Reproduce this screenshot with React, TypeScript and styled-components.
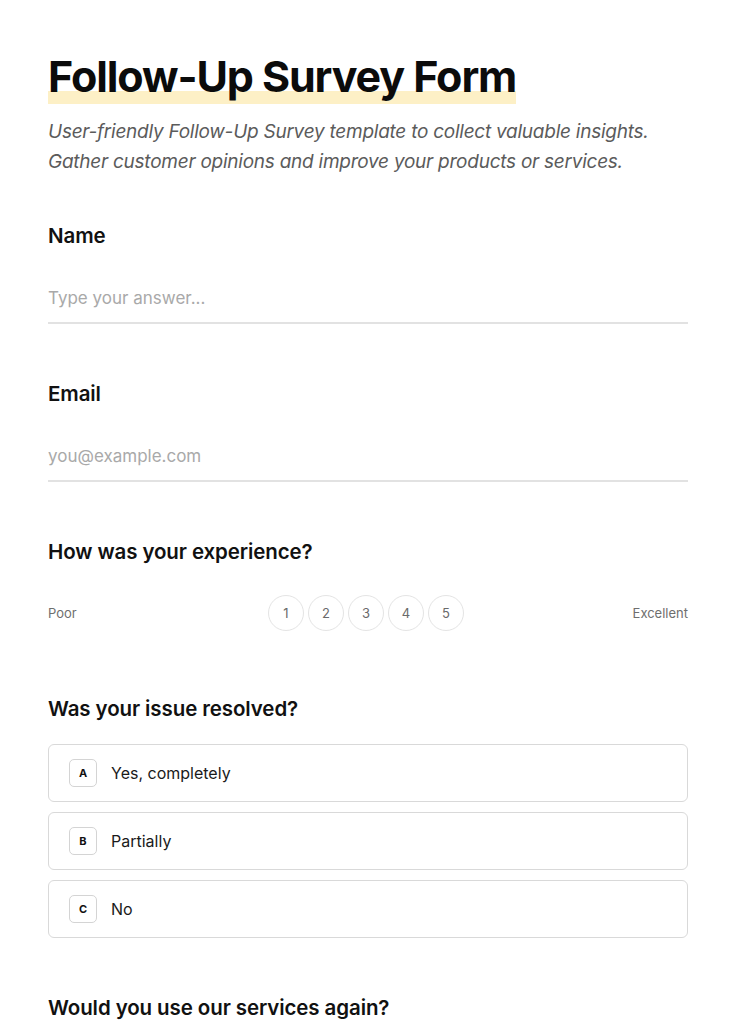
import styled, { createGlobalStyle } from 'styled-components';

const GlobalStyle = createGlobalStyle`
  html, body {
    margin: 0;
    padding: 0;
    background: #ffffff;
  }
  body {
    font-family: "Inter", "Liberation Sans", sans-serif;
    color: #111111;
  }
  * {
    box-sizing: border-box;
  }
`;

// Page wrapper
const Page = styled.div`
  width: 736px;
  padding: 49px 48px 0;
`;

const Header = styled.header`
  margin-bottom: 45px;
`;

const Title = styled.h1`
  margin: 0;
  font-size: 43px;
  line-height: 54px;
  font-weight: 700;
  letter-spacing: -1.1px;
  color: #0b0b0b;
`;

// Yellow marker underline behind the title
const Highlight = styled.span`
  display: inline-block;
  line-height: 54px;
  padding-bottom: 1px;
  vertical-align: top;
  background: linear-gradient(
    to bottom,
    transparent 0,
    transparent 42px,
    #fdf0c6 42px,
    #fdf0c6 55px
  );
`;

const Subtitle = styled.p`
  margin: 13px 0 0;
  font-size: 19px;
  line-height: 30px;
  font-style: italic;
  color: #5b5b5b;
  letter-spacing: -0.25px;
`;

const Form = styled.form`
  display: flex;
  flex-direction: column;
  gap: 56px;
`;

const Field = styled.div`
  display: flex;
  flex-direction: column;
`;

const Label = styled.label<{ $gap?: number }>`
  font-size: 20.5px;
  line-height: 28px;
  font-weight: 600;
  letter-spacing: -0.1px;
  color: #111111;
  margin-bottom: ${(p) => p.$gap ?? 23}px;
`;

const TextInput = styled.input`
  height: 51px;
  padding: 0;
  border: none;
  border-bottom: 2px solid #e2e2e2;
  font-family: inherit;
  font-size: 17px;
  color: #222;
  outline: none;
  background: transparent;
  &::placeholder {
    color: #a9a9a9;
  }
`;

const RatingRow = styled.div`
  display: flex;
  align-items: center;
  justify-content: space-between;
  padding-bottom: 8px;
`;

const ScaleLabel = styled.span<{ $right?: boolean }>`
  font-size: 13px;
  color: #6e6e6e;
  width: ${(p) => (p.$right ? 84 : 80)}px;
  text-align: ${(p) => (p.$right ? 'right' : 'left')};
`;

const Circles = styled.div`
  display: flex;
  gap: 4px;
`;

const Circle = styled.button`
  width: 36px;
  height: 36px;
  border-radius: 50%;
  border: 1px solid #e4e4e4;
  background: #fff;
  font-family: inherit;
  font-size: 13px;
  color: #6a6a6a;
  padding: 0;
  display: flex;
  align-items: center;
  justify-content: center;
`;

const Options = styled.div`
  display: flex;
  flex-direction: column;
  gap: 10px;
`;

const Option = styled.div`
  height: 58px;
  border: 1px solid #d9d9d9;
  border-radius: 6px;
  display: flex;
  align-items: center;
  padding: 0 20px;
  gap: 14px;
`;

const Key = styled.span`
  width: 28px;
  height: 28px;
  border: 1px solid #d4d4d4;
  border-radius: 5px;
  display: flex;
  align-items: center;
  justify-content: center;
  font-size: 11px;
  font-weight: 700;
  color: #111;
`;

const OptionText = styled.span`
  font-size: 16px;
  color: #1a1a1a;
`;

const options = [
  { key: 'A', text: 'Yes, completely' },
  { key: 'B', text: 'Partially' },
  { key: 'C', text: 'No' },
];

const App = () => {
  return (
    <>
      <GlobalStyle />
      <Page>
        <Header>
          <Title>
            <Highlight>Follow-Up Survey Form</Highlight>
          </Title>
          <Subtitle>
            User-friendly Follow-Up Survey template to collect valuable insights.
            <br />
            Gather customer opinions and improve your products or services.
          </Subtitle>
        </Header>

        <Form onSubmit={(e) => e.preventDefault()}>
          <Field>
            <Label>Name</Label>
            <TextInput type="text" placeholder="Type your answer..." />
          </Field>

          <Field>
            <Label>Email</Label>
            <TextInput type="email" placeholder="you@example.com" />
          </Field>

          <Field>
            <Label $gap={29}>How was your experience?</Label>
            <RatingRow>
              <ScaleLabel>Poor</ScaleLabel>
              <Circles>
                {[1, 2, 3, 4, 5].map((n) => (
                  <Circle type="button" key={n}>
                    {n}
                  </Circle>
                ))}
              </Circles>
              <ScaleLabel $right>Excellent</ScaleLabel>
            </RatingRow>
          </Field>

          <Field>
            <Label $gap={21}>Was your issue resolved?</Label>
            <Options>
              {options.map((o) => (
                <Option key={o.key}>
                  <Key>{o.key}</Key>
                  <OptionText>{o.text}</OptionText>
                </Option>
              ))}
            </Options>
          </Field>

          <Field>
            <Label>Would you use our services again?</Label>
          </Field>
        </Form>
      </Page>
    </>
  );
};

export default App;
